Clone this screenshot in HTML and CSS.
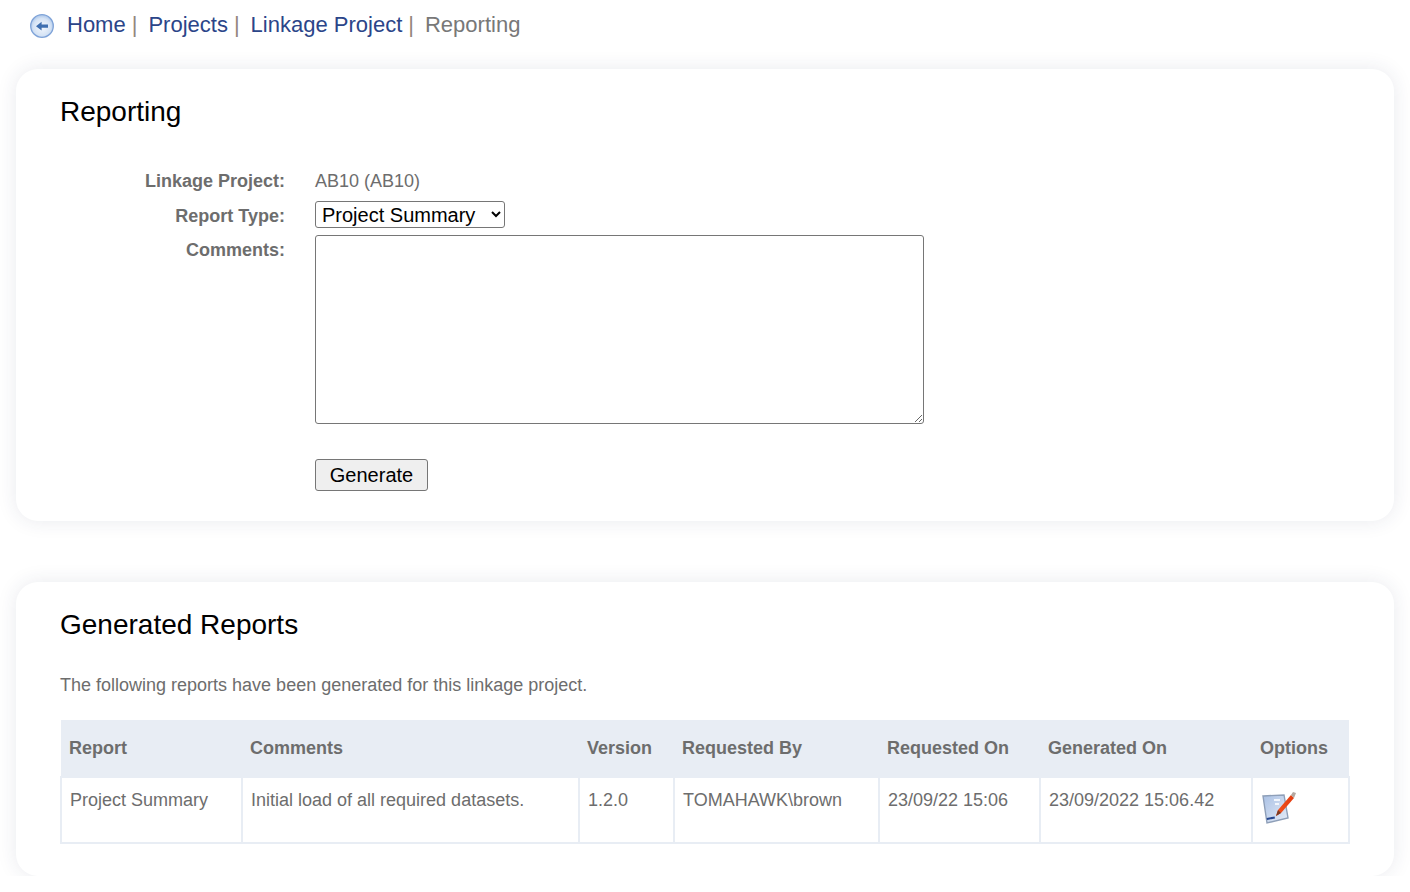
FILE: index.html
```html
<!DOCTYPE html>
<html lang="en">
<head>
  <meta charset="UTF-8">
  <title>Reporting</title>
  <link rel="stylesheet" href="styles.css">
</head>
<body>

  <!-- Breadcrumbs -->
  <nav class="crumbs">
    <svg class="back-icon" width="26" height="26" viewBox="0 0 26 26">
      <defs>
        <radialGradient id="backFill" cx="50%" cy="55%" r="55%">
          <stop offset="0" stop-color="#f4f8fd"/>
          <stop offset="0.7" stop-color="#d5e3f5"/>
          <stop offset="1" stop-color="#a9c4e8"/>
        </radialGradient>
      </defs>
      <circle cx="13" cy="13" r="11.3" fill="url(#backFill)" stroke="#7fa3d8" stroke-width="1.3"/>
      <path d="M7 13.2 L12.6 8.8 V11.6 H19 V14.8 H12.6 V17.6 Z" fill="#3f6fb0"/>
    </svg>
    <a href="#">Home</a><span class="sep">|</span>
    <a href="#">Projects</a><span class="sep">|</span>
    <a href="#">Linkage Project</a><span class="sep">|</span>
    <span class="current">Reporting</span>
  </nav>

  <section class="card card-form">
    <h2>Reporting</h2>
    <form class="report-form">
      <div class="form-label first">Linkage Project:</div>
      <div class="form-value first">AB10 (AB10)</div>

      <label class="form-label type" for="reportType">Report Type:</label>
      <div>
        <select id="reportType">
          <option>Project Summary</option>
        </select>
      </div>

      <label class="form-label comments" for="comments">Comments:</label>
      <div>
        <textarea id="comments"></textarea>
      </div>

      <div></div>
      <div class="actions">
        <button type="button">Generate</button>
      </div>
    </form>
  </section>

  <section class="card card-reports">
    <h2>Generated Reports</h2>
    <p class="intro">The following reports have been generated for this linkage project.</p>
    <table>
      <thead>
        <tr>
          <th class="col-report">Report</th>
          <th class="col-comments">Comments</th>
          <th class="col-version">Version</th>
          <th class="col-by">Requested By</th>
          <th class="col-on">Requested On</th>
          <th class="col-gen">Generated On</th>
          <th>Options</th>
        </tr>
      </thead>
      <tbody>
        <tr>
          <td>Project Summary</td>
          <td>Initial load of all required datasets.</td>
          <td>1.2.0</td>
          <td>TOMAHAWK\brown</td>
          <td>23/09/22 15:06</td>
          <td>23/09/2022 15:06.42</td>
          <td class="options">
            <svg width="36" height="36" viewBox="0 0 36 36">
              <defs>
                <linearGradient id="sheet" x1="0" y1="0" x2="1" y2="1">
                  <stop offset="0" stop-color="#a9c0e4"/>
                  <stop offset="1" stop-color="#e6edf8"/>
                </linearGradient>
                <linearGradient id="pen" x1="0" y1="0" x2="1" y2="0">
                  <stop offset="0" stop-color="#f2551f"/>
                  <stop offset="1" stop-color="#e23b10"/>
                </linearGradient>
              </defs>
              <path d="M2 6 L23 5 L27 28 L6 33 Z" fill="url(#sheet)" stroke="#8e9fb8" stroke-width="1.4"/>
              <path d="M6 30 L14 28.5 L13.6 26.4 L5.6 28 Z" fill="#24468f"/>
              <path d="M13 10 H19 M14 14 H18" stroke="#f2f6fc" stroke-width="2"/>
              <path d="M15 26 L17 20 L30 5 L33 8 L20 23 Z" fill="url(#pen)"/>
              <path d="M30 5 L32 2 L35 3 L33 8 Z" fill="#b3a8a0"/>
              <path d="M15 26 L17 20 L20 23 Z" fill="#7a3b24"/>
            </svg>
          </td>
        </tr>
      </tbody>
    </table>
  </section>

</body>
</html>
```

FILE: styles.css
```css
body {
  margin: 0;
  padding: 0 16px 0 16px;
  background: #fff;
  color: #6d6d6d;
  font-family: "Liberation Sans", Arial, sans-serif;
  font-size: 18px;
  overflow: hidden;
}

a {
  color: #2b4589;
  text-decoration: none;
}

/* Breadcrumbs */
.crumbs {
  display: flex;
  align-items: center;
  height: 50px;
  padding-left: 13px;
  font-size: 22px;
}

.back-icon {
  margin-right: 12px;
  margin-top: 2px;
}

.sep {
  color: #94877c;
  margin: 0 11px 0 6px;
}

.current {
  color: #787878;
}

/* Cards */
.card {
  background: #fff;
  border-radius: 22px;
  box-shadow: 0 0 20px rgba(40, 50, 90, 0.1);
  padding: 0 44px;
  box-sizing: border-box;
}

.card-form {
  height: 452px;
  margin-top: 19px;
  margin-bottom: 61px;
}

.card-reports {
  height: 294px;
}

h2 {
  margin: 0;
  padding-top: 27px;
  color: #000;
  font-size: 28px;
  font-weight: normal;
  line-height: 32px;
}

/* Form */
.report-form {
  display: grid;
  grid-template-columns: 225px 1fr;
  column-gap: 30px;
  margin-top: 41px;
  align-items: start;
}

.form-label {
  font-weight: bold;
  text-align: right;
}

.form-label.first,
.form-value.first {
  line-height: 24px;
  height: 32px;
}

.form-label.type {
  line-height: 24px;
  margin-top: 3px;
}

.form-label.comments {
  line-height: 24px;
  margin-top: 3px;
}

select {
  display: block;
  width: 190px;
  height: 27px;
  padding: 0 2px;
  margin-bottom: 7px;
  background: #fff;
  color: #000;
  border: 1px solid #767676;
  border-radius: 3px;
  font-family: "Liberation Sans", Arial, sans-serif;
  font-size: 20px;
}

textarea {
  display: block;
  box-sizing: border-box;
  width: 609px;
  height: 189px;
  background: #fff;
  border: 1px solid #767676;
  border-radius: 3px;
}

.actions {
  margin-top: 35px;
}

button {
  display: block;
  width: 113px;
  height: 32px;
  padding: 0;
  background: #efefef;
  color: #000;
  border: 1px solid #767676;
  border-radius: 3px;
  font-family: "Liberation Sans", Arial, sans-serif;
  font-size: 20px;
}

/* Reports table */
.intro {
  margin: 0;
  padding-top: 33px;
  line-height: 22px;
}

table {
  width: 1290px;
  margin-top: 24px;
  border-collapse: collapse;
  table-layout: fixed;
}

th {
  height: 57px;
  box-sizing: border-box;
  padding: 0 8px;
  background: #e8edf4;
  text-align: left;
  font-weight: bold;
}

td {
  height: 66px;
  box-sizing: border-box;
  padding: 11px 8px 0;
  border: 2px solid #e8edf4;
  vertical-align: top;
  line-height: 22px;
}

td.options {
  padding: 12px 0 0 8px;
}

.options svg {
  display: block;
}

.col-report { width: 181px; }
.col-comments { width: 337px; }
.col-version { width: 95px; }
.col-by { width: 205px; }
.col-on { width: 161px; }
.col-gen { width: 212px; }
```
